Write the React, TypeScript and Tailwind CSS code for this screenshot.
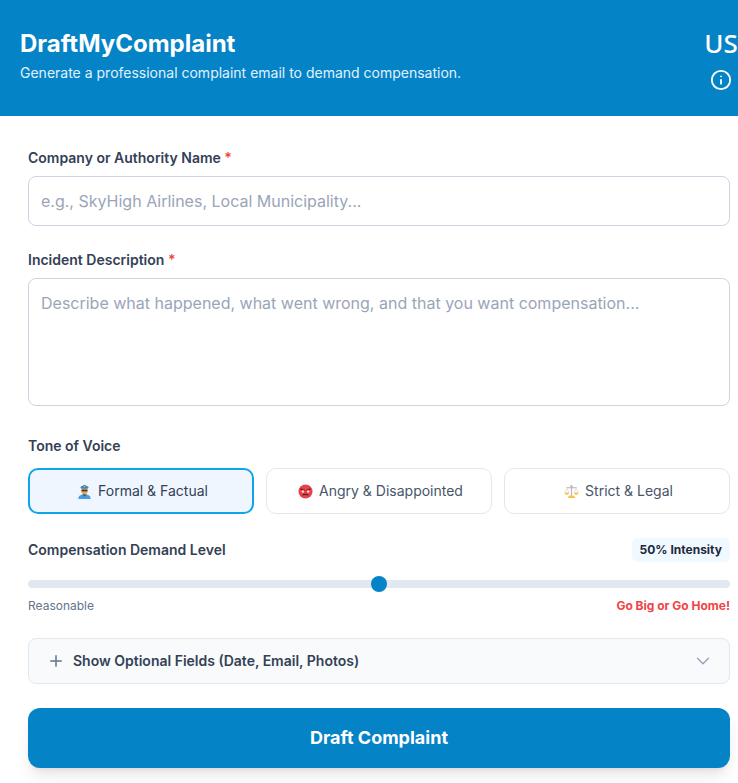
import { ChevronDown, Info, Plus } from "lucide-react";

const OfficerIcon = () => (
  <svg viewBox="0 0 16 16" className="ml-[3px] w-[15px] h-[15px] shrink-0">
    <path d="M1.500 16c0-3.400 2.400-5 6.500-5s6.500 1.600 6.500 5z" fill="#4a9be0" />
    <path d="M6 11h4l-2 2.500z" fill="#27507f" />
    <rect x="4.800" y="4.500" width="6.400" height="6.500" rx="3" fill="#f0a33a" />
    <rect x="4.800" y="6" width="6.400" height="1.800" fill="#3a3a3a" />
    <path d="M3.500 3.200 8 .8l4.500 2.400L11.500 5h-7z" fill="#3b82c4" />
    <rect x="7.300" y="2" width="1.400" height="1.400" fill="#f5c542" />
  </svg>
);

const AngryIcon = () => (
  <svg viewBox="0 0 16 16" className="ml-[3px] w-[15px] h-[15px] shrink-0">
    <circle cx="8" cy="8" r="7.500" fill="#e5424a" />
    <path d="M2.800 5.200 7 7M13.200 5.200 9 7" stroke="#6b1a20" strokeWidth="1.200" />
    <circle cx="5.200" cy="8" r="1.300" fill="#f7d9d9" />
    <circle cx="10.800" cy="8" r="1.300" fill="#f7d9d9" />
    <path d="M4.800 12c1-1.300 5.400-1.300 6.400 0" fill="none" stroke="#6b1a20" strokeWidth="1.200" />
  </svg>
);

const ScalesIcon = () => (
  <svg viewBox="0 0 16 16" className="ml-[3px] w-[15px] h-[15px] shrink-0">
    <path d="M8 1v11M2.500 4h11" stroke="#b7abd0" strokeWidth="1.200" fill="none" />
    <circle cx="8" cy="2.500" r="1.300" fill="#e0b96e" />
    <path d="M3 4.500.8 9M3 4.500 5.200 9M13 4.500 10.800 9M13 4.500 15.200 9" stroke="#d5cfe2" strokeWidth=".7" fill="none" />
    <path d="M.5 9h5a2.500 2.500 0 0 1-5 0zM10.500 9h5a2.500 2.500 0 0 1-5 0z" fill="#f8c24a" />
    <path d="M4 15c0-1.800 1.800-3 4-3s4 1.200 4 3z" fill="#f8c24a" />
  </svg>
);

const tones = [
  { label: "Formal & Factual", icon: <OfficerIcon />, active: true },
  { label: "Angry & Disappointed", icon: <AngryIcon />, active: false },
  { label: "Strict & Legal", icon: <ScalesIcon />, active: false },
];

export default function App() {
  return (
    <div className="w-[738px] h-[783px] overflow-hidden bg-white font-['Inter',sans-serif]">
      <header className="h-[116px] bg-[#0583c7] pl-5 flex justify-between text-white">
        <div className="pt-7">
          <h1 className="text-2xl leading-8 font-bold">DraftMyComplaint</h1>
          <p className="text-sm leading-5 mt-[3px] text-[#e0f2fe]">
            Generate a professional complaint email to demand compensation.
          </p>
        </div>
        <div className="w-[34px] pt-[27px] flex flex-col items-center">
          <span className="text-[26px] leading-8 font-medium font-['Noto_Sans',sans-serif]">US</span>
          <Info className="w-[22px] h-[22px] mt-[10px]" />
        </div>
      </header>

      <main className="pl-7 pr-2 pt-8 flex flex-col">
        <label className="text-sm leading-5 font-semibold text-[#334155] mb-2">
          Company or Authority Name <span className="text-[#ef4444]">*</span>
        </label>
        <input
          placeholder="e.g., SkyHigh Airlines, Local Municipality..."
          className="h-[50px] px-3 border border-[#cbd5e1] rounded-lg text-base text-slate-700 placeholder:text-[#9aa5b8] outline-none"
        />

        <label className="text-sm leading-5 font-semibold text-[#334155] mt-6 mb-2">
          Incident Description <span className="text-[#ef4444]">*</span>
        </label>
        <textarea
          placeholder="Describe what happened, what went wrong, and that you want compensation..."
          className="h-[128px] px-3 py-3 border border-[#cbd5e1] rounded-lg text-base leading-6 text-slate-700 placeholder:text-[#9aa5b8] outline-none resize-none"
        />

        <label className="text-sm leading-5 font-semibold text-[#334155] mt-[30px] mb-3">
          Tone of Voice
        </label>
        <div className="grid grid-cols-3 gap-3">
          {tones.map((tone) => (
            <button
              key={tone.label}
              className={
                tone.active
                  ? "h-[46px] flex items-center justify-center gap-[6px] rounded-[10px] border-2 border-[#0ea5e9] bg-[#eff6ff] text-sm text-[#334155]"
                  : "h-[46px] flex items-center justify-center gap-[6px] rounded-[10px] border border-[#e2e8f0] bg-white text-sm text-[#475569]"
              }
            >
              {tone.icon}
              {tone.label}
            </button>
          ))}
        </div>

        <div className="mt-6 flex items-center justify-between">
          <span className="text-sm leading-5 font-semibold text-[#334155]">Compensation Demand Level</span>
          <span className="px-2 py-1 rounded-md bg-[#f0f9ff] text-xs font-bold text-[#1e293b]">50% Intensity</span>
        </div>
        <div className="relative h-2 mt-[18px] rounded-full bg-[#e2e8f0]">
          <div className="absolute left-1/2 top-1/2 -translate-x-1/2 -translate-y-1/2 w-4 h-4 rounded-full bg-[#0583c7]" />
        </div>
        <div className="mt-[10px] flex justify-between text-xs">
          <span className="text-[#64748b]">Reasonable</span>
          <span className="font-bold text-[#ef4444]">Go Big or Go Home!</span>
        </div>

        <button className="mt-6 h-[46px] pl-[18px] pr-[15px] flex items-center justify-between rounded-lg border border-[#e2e8f0] bg-[#f8fafc]">
          <span className="flex items-center gap-2 text-sm font-semibold text-[#334155]">
            <Plus className="w-[18px] h-[18px] text-[#64748b]" strokeWidth={2} />
            Show Optional Fields (Date, Email, Photos)
          </span>
          <ChevronDown className="w-[22px] h-[22px] text-[#94a3b8]" strokeWidth={1.5} />
        </button>

        <button className="mt-6 h-[60px] rounded-xl bg-[#0583c7] text-lg font-bold text-white shadow-lg">
          Draft Complaint
        </button>
      </main>
    </div>
  );
}
